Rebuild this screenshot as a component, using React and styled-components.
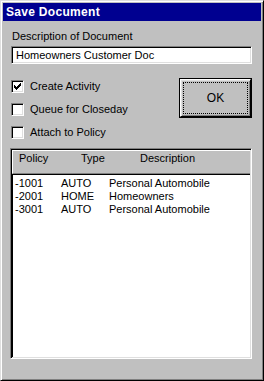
import React from "react";
import styled, { createGlobalStyle } from "styled-components";

const Global = createGlobalStyle`
  body {
    margin: 0;
    background: #c0c0c0;
    font-family: "Liberation Sans", Arial, sans-serif;
  }
`;

const Window = styled.div`
  width: 264px;
  height: 381px;
  box-sizing: border-box;
  background: #c0c0c0;
  border: 1px solid;
  border-color: #dfdfdf #000 #000 #dfdfdf;
  box-shadow: inset 1px 1px 0 #fff, inset -1px -1px 0 #808080;
  padding: 2px;
  display: flex;
  flex-direction: column;
`;

const TitleBar = styled.div`
  height: 18px;
  background: #000090;
  color: #fff;
  font-weight: bold;
  font-size: 12px;
  line-height: 18px;
  padding-left: 3px;
  letter-spacing: 0.3px;
`;

const Body = styled.div`
  flex: 1;
  display: flex;
  flex-direction: column;
  padding: 9px 9px 19px 8px;
`;

const Label = styled.div`
  font-size: 11px;
  line-height: 13px;
  color: #000;
  padding-left: 1px;
`;

const Input = styled.div`
  margin-top: 3px;
  height: 18px;
  box-sizing: border-box;
  background: #fff;
  border: 1px solid;
  border-color: #808080 #fff #fff #808080;
  box-shadow: inset 1px 1px 0 #000, inset -1px -1px 0 #dfdfdf;
  font-size: 11px;
  line-height: 16px;
  padding-left: 4px;
  color: #000;
`;

const Options = styled.div`
  margin-top: 14px;
  display: flex;
  justify-content: space-between;
  align-items: flex-start;
`;

const Checks = styled.div`
  display: flex;
  flex-direction: column;
  gap: 10px;
  padding-top: 2px;
`;

const CheckRow = styled.div`
  display: flex;
  align-items: center;
  gap: 6px;
  font-size: 11px;
  line-height: 13px;
  height: 13px;
`;

const Box = styled.div`
  width: 13px;
  height: 13px;
  box-sizing: border-box;
  background: #fff;
  border: 1px solid;
  border-color: #808080 #fff #fff #808080;
  box-shadow: inset 1px 1px 0 #000, inset -1px -1px 0 #dfdfdf;
  display: flex;
  align-items: center;
  justify-content: center;
`;

const CHECK = [2, 3, 4, 3, 2, 1, 0];

const Check = ({ on, children }) => (
  <CheckRow>
    <Box>
      {on && (
        <svg width="7" height="7" viewBox="0 0 7 7" shapeRendering="crispEdges">
          {CHECK.map((y, x) => (
            <rect key={x} x={x} y={y} width="1" height="3" fill="#000" />
          ))}
        </svg>
      )}
    </Box>
    {children}
  </CheckRow>
);

const Button = styled.div`
  width: 73px;
  height: 40px;
  box-sizing: border-box;
  border: 1px solid #000;
  display: flex;
`;

const ButtonFace = styled.div`
  flex: 1;
  border: 1px solid;
  border-color: #fff #000 #000 #fff;
  box-shadow: inset 1px 1px 0 #dfdfdf, inset -1px -1px 0 #808080;
  padding: 2px;
  display: flex;
`;

const Focus = styled.div`
  flex: 1;
  border: 1px dotted #000;
  display: flex;
  align-items: center;
  justify-content: center;
  font-size: 12px;
  color: #000;
`;

const List = styled.div`
  margin-top: 9px;
  margin-left: -1px;
  flex: 1;
  display: flex;
  flex-direction: column;
  border: 1px solid;
  border-color: #808080 #fff #fff #808080;
  box-shadow: inset 1px 1px 0 #000, inset -1px -1px 0 #dfdfdf;
  padding: 1px;
`;

const Header = styled.div`
  height: 24px;
  box-sizing: border-box;
  display: grid;
  grid-template-columns: 48px 56px 1fr;
  border-top: 1px solid #fff;
  border-left: 1px solid #fff;
  border-bottom: 1px solid #808080;
  box-shadow: 0 1px 0 #000;
  font-size: 11px;
  line-height: 13px;
  padding-top: 1px;
`;

const HeadCell = styled.div`
  padding-left: ${({ $pad }) => $pad}px;
`;

const Rows = styled.div`
  flex: 1;
  background: #fff;
  margin-top: 1px;
  padding-top: 2px;
  border-left: 1px solid #000;
`;

const Row = styled.div`
  display: grid;
  grid-template-columns: 46px 48px 1fr;
  padding-left: 2px;
  font-size: 11px;
  line-height: 13px;
  color: #000;
`;

const rows = [
  ["-1001", "AUTO", "Personal Automobile"],
  ["-2001", "HOME", "Homeowners"],
  ["-3001", "AUTO", "Personal Automobile"],
];

export default function App() {
  return (
    <>
      <Global />
      <Window>
        <TitleBar>Save Document</TitleBar>
        <Body>
          <Label>Description of Document</Label>
          <Input>Homeowners Customer Doc</Input>
          <Options>
            <Checks>
              <Check on>Create Activity</Check>
              <Check>Queue for Closeday</Check>
              <Check>Attach to Policy</Check>
            </Checks>
            <Button>
              <ButtonFace>
                <Focus>OK</Focus>
              </ButtonFace>
            </Button>
          </Options>
          <List>
            <Header>
              <HeadCell $pad={6}>Policy</HeadCell>
              <HeadCell $pad={20}>Type</HeadCell>
              <HeadCell $pad={23}>Description</HeadCell>
            </Header>
            <Rows>
              {rows.map((r) => (
                <Row key={r[0]}>
                  <span>{r[0]}</span>
                  <span>{r[1]}</span>
                  <span>{r[2]}</span>
                </Row>
              ))}
            </Rows>
          </List>
        </Body>
      </Window>
    </>
  );
}
